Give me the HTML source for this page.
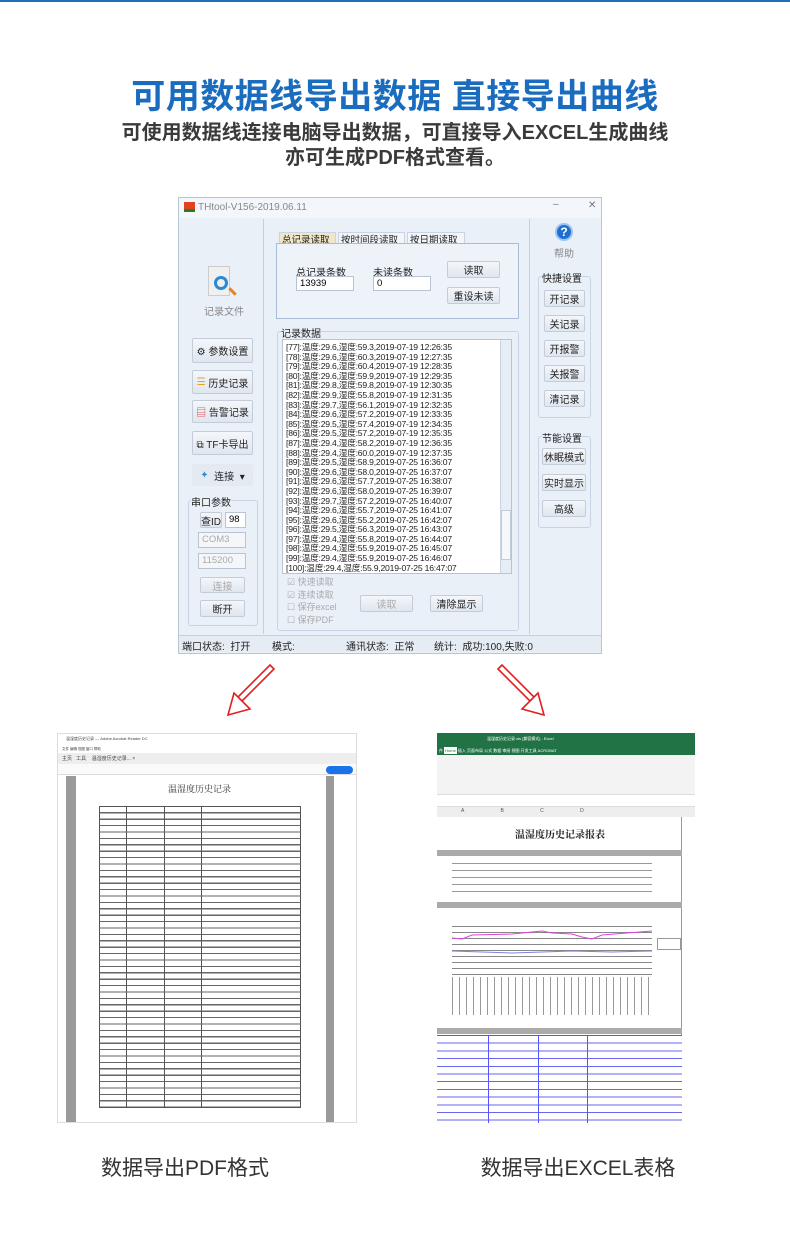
<!DOCTYPE html>
<html><head><meta charset="utf-8"><style>
*{margin:0;padding:0;box-sizing:border-box}
body{width:790px;height:1245px;background:#fff;position:relative;overflow:hidden;font-family:"Liberation Sans","Noto Sans CJK SC",sans-serif}
.a{position:absolute}
.t{font-family:"Liberation Sans","Noto Sans CJK SC",sans-serif}
.btn{position:absolute;background:linear-gradient(#f4f7fb,#dfe6ef);border:1px solid #c4ccd8;font-size:10px;color:#222;text-align:center;display:flex;align-items:center;justify-content:center;border-radius:2px}
.grp{position:absolute;border:1px solid #c8d4e4;border-radius:3px}
.lbl{position:absolute;font-size:10px;color:#222;white-space:nowrap}
.inp{position:absolute;background:#fff;border:1px solid #b8c4d4;font-size:9.5px;padding-left:3px;line-height:14px}
.row{height:9.6px;font-size:8.6px;line-height:9.6px;white-space:nowrap;color:#222;letter-spacing:-0.2px}
.dis{color:#aaa}
</style></head><body>
<div class="a" style="left:0;top:0;width:790px;height:2px;background:#1f6fb8"></div>
<div class="a t" style="left:0;top:69px;width:790px;text-align:center;font-size:34px;font-weight:bold;color:#1a6cbf;letter-spacing:0.5px">可用数据线导出数据 直接导出曲线</div>
<div class="a t" style="left:0;top:121px;width:790px;text-align:center;font-size:20px;font-weight:bold;color:#3a3a3a;line-height:25px">可使用数据线连接电脑导出数据，可直接导入EXCEL生成曲线<br>亦可生成PDF格式查看。</div>

<!-- window -->
<div class="a" style="left:178px;top:197px;width:424px;height:457px;background:#eaf0f8;border:1px solid #b9c6d6"></div>
<div class="a" style="left:179px;top:198px;width:422px;height:20px;background:#f3f6fb"></div>
<div class="a" style="left:184px;top:202px;width:11px;height:10px;background:#e0431f;border-bottom:3px solid #2a7a2a"></div>
<div class="lbl" style="left:198px;top:202px;color:#888;font-size:10px">THtool-V156-2019.06.11</div>
<div class="lbl" style="left:553px;top:199px;color:#777">–</div>
<div class="lbl" style="left:588px;top:200px;color:#777">✕</div>
<div class="a" style="left:263px;top:219px;width:1px;height:415px;background:#c4d0df"></div>
<div class="a" style="left:529px;top:219px;width:1px;height:415px;background:#c4d0df"></div>

<!-- left -->
<div class="a" style="left:208px;top:266px;width:22px;height:30px;background:#f0f0f0;border:1px solid #ccc"></div>
<div class="a" style="left:214px;top:276px;width:14px;height:14px;border:3px solid #2a8ad6;border-radius:50%"></div>
<div class="a" style="left:228px;top:290px;width:9px;height:3px;background:#e8831f;transform:rotate(45deg)"></div>
<div class="lbl" style="left:204px;top:303px;color:#888">记录文件</div>
<div class="btn" style="left:192px;top:338px;width:61px;height:25px">⚙ 参数设置</div>
<div class="btn" style="left:192px;top:370px;width:61px;height:24px"><span style="color:#e8a020">☰</span>&nbsp;历史记录</div>
<div class="btn" style="left:192px;top:400px;width:61px;height:23px"><span style="color:#d33">▤</span>&nbsp;告警记录</div>
<div class="btn" style="left:192px;top:431px;width:61px;height:24px">⧉ TF卡导出</div>
<div class="btn" style="left:192px;top:464px;width:61px;height:22px;background:#e4eaf2;border-color:#e4eaf2"><span style="color:#3a8ad0">✦</span>&nbsp;&nbsp;连接&nbsp;&nbsp;▾</div>
<div class="grp" style="left:188px;top:500px;width:70px;height:126px"></div>
<div class="lbl" style="left:191px;top:494px;background:#eaf0f8">串口参数</div>
<div class="btn" style="left:200px;top:512px;width:22px;height:16px">查ID</div>
<div class="inp" style="left:225px;top:512px;width:21px;height:16px">98</div>
<div class="inp dis" style="left:198px;top:532px;width:48px;height:16px;background:#f4f6f9">COM3</div>
<div class="inp dis" style="left:198px;top:553px;width:48px;height:16px;background:#f4f6f9">115200</div>
<div class="btn dis" style="left:200px;top:577px;width:45px;height:16px;color:#aaa">连接</div>
<div class="btn" style="left:200px;top:600px;width:45px;height:17px">断开</div>

<!-- middle -->
<div class="a" style="left:279px;top:232px;width:57px;height:12px;background:#f0e6c8;border:1px solid #c8d4e4"></div>
<div class="lbl" style="left:282px;top:232px;font-size:9.5px">总记录读取</div>
<div class="a" style="left:338px;top:232px;width:67px;height:12px;border:1px solid #c8d4e4;background:#f2f6fb"></div>
<div class="lbl" style="left:341px;top:232px;font-size:9.5px">按时间段读取</div>
<div class="a" style="left:407px;top:232px;width:58px;height:12px;border:1px solid #c8d4e4;background:#f2f6fb"></div>
<div class="lbl" style="left:410px;top:232px;font-size:9.5px">按日期读取</div>
<div class="a" style="left:276px;top:243px;width:243px;height:76px;border:1px solid #a9bcd6;background:#eef3fa"></div>
<div class="lbl" style="left:296px;top:264px">总记录条数</div>
<div class="lbl" style="left:373px;top:264px">未读条数</div>
<div class="inp" style="left:296px;top:276px;width:58px;height:15px">13939</div>
<div class="inp" style="left:373px;top:276px;width:58px;height:15px">0</div>
<div class="btn" style="left:447px;top:261px;width:53px;height:17px">读取</div>
<div class="btn" style="left:447px;top:287px;width:53px;height:17px">重设未读</div>
<div class="grp" style="left:277px;top:331px;width:242px;height:300px"></div>
<div class="lbl" style="left:281px;top:325px;background:#eaf0f8">记录数据</div>
<div class="a" style="left:282px;top:339px;width:230px;height:235px;background:#fff;border:1px solid #b8c4d4;padding:3px 0 0 3px">
<div class="row">[77]:温度:29.6,湿度:59.3,2019-07-19 12:26:35</div>
<div class="row">[78]:温度:29.6,湿度:60.3,2019-07-19 12:27:35</div>
<div class="row">[79]:温度:29.6,湿度:60.4,2019-07-19 12:28:35</div>
<div class="row">[80]:温度:29.6,湿度:59.9,2019-07-19 12:29:35</div>
<div class="row">[81]:温度:29.8,湿度:59.8,2019-07-19 12:30:35</div>
<div class="row">[82]:温度:29.9,湿度:55.8,2019-07-19 12:31:35</div>
<div class="row">[83]:温度:29.7,湿度:56.1,2019-07-19 12:32:35</div>
<div class="row">[84]:温度:29.6,湿度:57.2,2019-07-19 12:33:35</div>
<div class="row">[85]:温度:29.5,湿度:57.4,2019-07-19 12:34:35</div>
<div class="row">[86]:温度:29.5,湿度:57.2,2019-07-19 12:35:35</div>
<div class="row">[87]:温度:29.4,湿度:58.2,2019-07-19 12:36:35</div>
<div class="row">[88]:温度:29.4,湿度:60.0,2019-07-19 12:37:35</div>
<div class="row">[89]:温度:29.5,湿度:58.9,2019-07-25 16:36:07</div>
<div class="row">[90]:温度:29.6,湿度:58.0,2019-07-25 16:37:07</div>
<div class="row">[91]:温度:29.6,湿度:57.7,2019-07-25 16:38:07</div>
<div class="row">[92]:温度:29.6,湿度:58.0,2019-07-25 16:39:07</div>
<div class="row">[93]:温度:29.7,湿度:57.2,2019-07-25 16:40:07</div>
<div class="row">[94]:温度:29.6,湿度:55.7,2019-07-25 16:41:07</div>
<div class="row">[95]:温度:29.6,湿度:55.2,2019-07-25 16:42:07</div>
<div class="row">[96]:温度:29.5,湿度:56.3,2019-07-25 16:43:07</div>
<div class="row">[97]:温度:29.4,湿度:55.8,2019-07-25 16:44:07</div>
<div class="row">[98]:温度:29.4,湿度:55.9,2019-07-25 16:45:07</div>
<div class="row">[99]:温度:29.4,湿度:55.9,2019-07-25 16:46:07</div>
<div class="row">[100]:温度:29.4,湿度:55.9,2019-07-25 16:47:07</div>
</div>
<div class="a" style="left:500px;top:340px;width:11px;height:233px;background:#e6edf6;border-left:1px solid #c8d4e4"></div>
<div class="a" style="left:501px;top:510px;width:10px;height:50px;background:#f4f7fb;border:1px solid #c4ccd8"></div>
<div class="lbl dis" style="left:287px;top:576px;font-size:9px;line-height:12.5px">☑ 快速读取<br>☑ 连续读取<br>☐ 保存excel<br>☐ 保存PDF</div>
<div class="btn" style="left:360px;top:595px;width:53px;height:17px;color:#aaa">读取</div>
<div class="btn" style="left:430px;top:595px;width:53px;height:17px">清除显示</div>

<!-- right -->
<div class="a" style="left:555px;top:223px;width:18px;height:18px;border-radius:50%;background:#1f6fd0;border:2px solid #9cc4ee;color:#fff;font-size:12px;font-weight:bold;text-align:center;line-height:14px">?</div>
<div class="lbl" style="left:554px;top:245px;color:#888">帮助</div>
<div class="grp" style="left:538px;top:276px;width:53px;height:142px"></div>
<div class="lbl" style="left:542px;top:270px;background:#eaf0f8">快捷设置</div>
<div class="btn" style="left:544px;top:290px;width:41px;height:17px">开记录</div>
<div class="btn" style="left:544px;top:315px;width:41px;height:17px">关记录</div>
<div class="btn" style="left:544px;top:340px;width:41px;height:17px">开报警</div>
<div class="btn" style="left:544px;top:365px;width:41px;height:17px">关报警</div>
<div class="btn" style="left:544px;top:390px;width:41px;height:17px">清记录</div>
<div class="grp" style="left:538px;top:436px;width:53px;height:92px"></div>
<div class="lbl" style="left:542px;top:430px;background:#eaf0f8">节能设置</div>
<div class="btn" style="left:542px;top:448px;width:44px;height:17px">休眠模式</div>
<div class="btn" style="left:542px;top:474px;width:44px;height:17px">实时显示</div>
<div class="btn" style="left:542px;top:500px;width:44px;height:17px">高级</div>

<!-- status -->
<div class="a" style="left:179px;top:635px;width:422px;height:17px;background:#e6ecf4;border-top:1px solid #c4d0df"></div>
<div class="lbl" style="left:182px;top:638px">端口状态: &nbsp;打开</div>
<div class="lbl" style="left:272px;top:638px">模式:</div>
<div class="lbl" style="left:346px;top:638px">通讯状态: &nbsp;正常</div>
<div class="lbl" style="left:434px;top:638px">统计: &nbsp;成功:100,失败:0</div>

<!-- arrows -->
<svg class="a" style="left:220px;top:660px" width="340" height="70">
<g fill="#fff" stroke="#e02020" stroke-width="1.6">
<path d="M50 5 L54 9 L22 41 L30 49 L8 55 L14 33 L22 41 L18 37 Z"/>
<path d="M282 5 L278 9 L310 41 L302 49 L324 55 L318 33 L310 41 L314 37 Z"/>
</g></svg>

<!-- PDF -->
<div class="a" style="left:57px;top:733px;width:300px;height:390px;background:#fff;border:1px solid #ddd;overflow:hidden">
<div class="a" style="left:0;top:0;width:300px;height:13px;background:#fff;font-size:4px;color:#444;padding:2px 8px">温湿度历史记录 — Adobe Acrobat Reader DC</div>
<div class="a" style="left:0;top:13px;width:300px;height:6px;font-size:3.5px;color:#444;padding-left:4px">文件 编辑 视图 窗口 帮助</div>
<div class="a" style="left:0;top:19px;width:300px;height:11px;background:#eee;font-size:5px;color:#444;padding:2px 4px">主页 &nbsp; 工具 &nbsp;&nbsp; 温湿度历史记录... ×</div>
<div class="a" style="left:0;top:30px;width:300px;height:11px;background:#fafafa;border-bottom:1px solid #ddd"></div>
<div class="a" style="left:268px;top:32px;width:27px;height:8px;background:#1a73e8;border-radius:4px"></div>
<div class="a" style="left:8px;top:42px;width:268px;height:348px;background:#9a9a9a"></div>
<div class="a" style="left:18px;top:42px;width:250px;height:348px;background:#fff"></div>
<div class="lbl" style="left:110px;top:48px;font-family:'Noto Serif CJK SC',serif;font-size:9px;color:#333">温湿度历史记录</div>
<div class="a" style="left:41px;top:72px;width:202px;height:302px;border:1px solid #555;background:repeating-linear-gradient(#fff 0 5.2px,#666 5.2px 6.4px)"></div>
<div class="a" style="left:68px;top:72px;width:1px;height:302px;background:#555"></div>
<div class="a" style="left:106px;top:72px;width:1px;height:302px;background:#555"></div>
<div class="a" style="left:143px;top:72px;width:1px;height:302px;background:#555"></div>
<div class="a" style="left:286px;top:42px;width:14px;height:348px;background:#fff"></div>
</div>

<!-- Excel -->
<div class="a" style="left:437px;top:733px;width:258px;height:390px;background:#fff;overflow:hidden">
<div class="a" style="left:0;top:0;width:258px;height:12px;background:#217346;font-size:4px;color:#fff;padding:3px 50px">温湿度历史记录.xls [兼容模式] - Excel</div>
<div class="a" style="left:0;top:12px;width:258px;height:10px;background:#217346;font-size:4px;color:#fff;padding:3px 2px">件 <span style="background:#fff;color:#217346;padding:1px">Home</span> 插入 页面布局 公式 数据 审阅 视图 开发工具 ACROBAT</div>
<div class="a" style="left:0;top:22px;width:258px;height:40px;background:#f3f3f3;border-bottom:1px solid #ddd"></div>
<div class="a" style="left:0;top:63px;width:258px;height:11px;background:#fff;border-bottom:1px solid #ddd"></div>
<div class="a" style="left:0;top:74px;width:258px;height:10px;background:#eee;font-size:5px;color:#555;word-spacing:35px;padding:1px 24px">A B C D</div>
<div class="a" style="left:0;top:84px;width:245px;height:306px;background:#fff;border-right:1px solid #999"></div>
<div class="lbl" style="left:78px;top:93px;font-family:'Noto Serif CJK SC',serif;font-size:10px;font-weight:bold;color:#222">温湿度历史记录报表</div>
<div class="a" style="left:0;top:117px;width:245px;height:6px;background:#aaa"></div>
<div class="a" style="left:0;top:169px;width:245px;height:6px;background:#aaa"></div>
<div class="a" style="left:15px;top:128px;width:200px;height:35px;background:repeating-linear-gradient(#fff 0 2px,#999 2px 3px,#fff 3px 7px)"></div>
<div class="a" style="left:15px;top:188px;width:200px;height:54px;background:repeating-linear-gradient(#fff 0 5px,#888 5px 6px)"></div>
<svg class="a" style="left:15px;top:188px" width="200" height="54"><polyline fill="none" stroke="#e040e0" stroke-width="1" points="0,17 10,18 20,14 60,13 90,10 100,12 120,13 130,16 140,18 150,14 200,10"/><polyline fill="none" stroke="#8080e0" stroke-width="1" points="0,30 60,32 120,30 160,31 200,30"/></svg>
<div class="a" style="left:220px;top:205px;width:24px;height:12px;border:1px solid #999"></div>
<div class="a" style="left:15px;top:244px;width:200px;height:38px;background:repeating-linear-gradient(90deg,#999 0 1px,#fff 1px 7px)"></div>
<div class="a" style="left:0;top:295px;width:245px;height:6px;background:#aaa"></div>
<div class="a" style="left:0;top:302px;width:245px;height:88px;border-top:1px solid #55f;background:repeating-linear-gradient(#fff 0 6.7px,#66e 6.7px 7.7px)"></div>
<div class="a" style="left:51px;top:302px;width:1px;height:88px;background:#55f"></div>
<div class="a" style="left:101px;top:302px;width:1px;height:88px;background:#55f"></div>
<div class="a" style="left:150px;top:302px;width:1px;height:88px;background:#55f"></div>
</div>

<div class="a t" style="left:85px;top:1152px;width:200px;text-align:center;font-size:21px;color:#333">数据导出PDF格式</div>
<div class="a t" style="left:468px;top:1152px;width:220px;text-align:center;font-size:21px;color:#333">数据导出EXCEL表格</div>
</body></html>
